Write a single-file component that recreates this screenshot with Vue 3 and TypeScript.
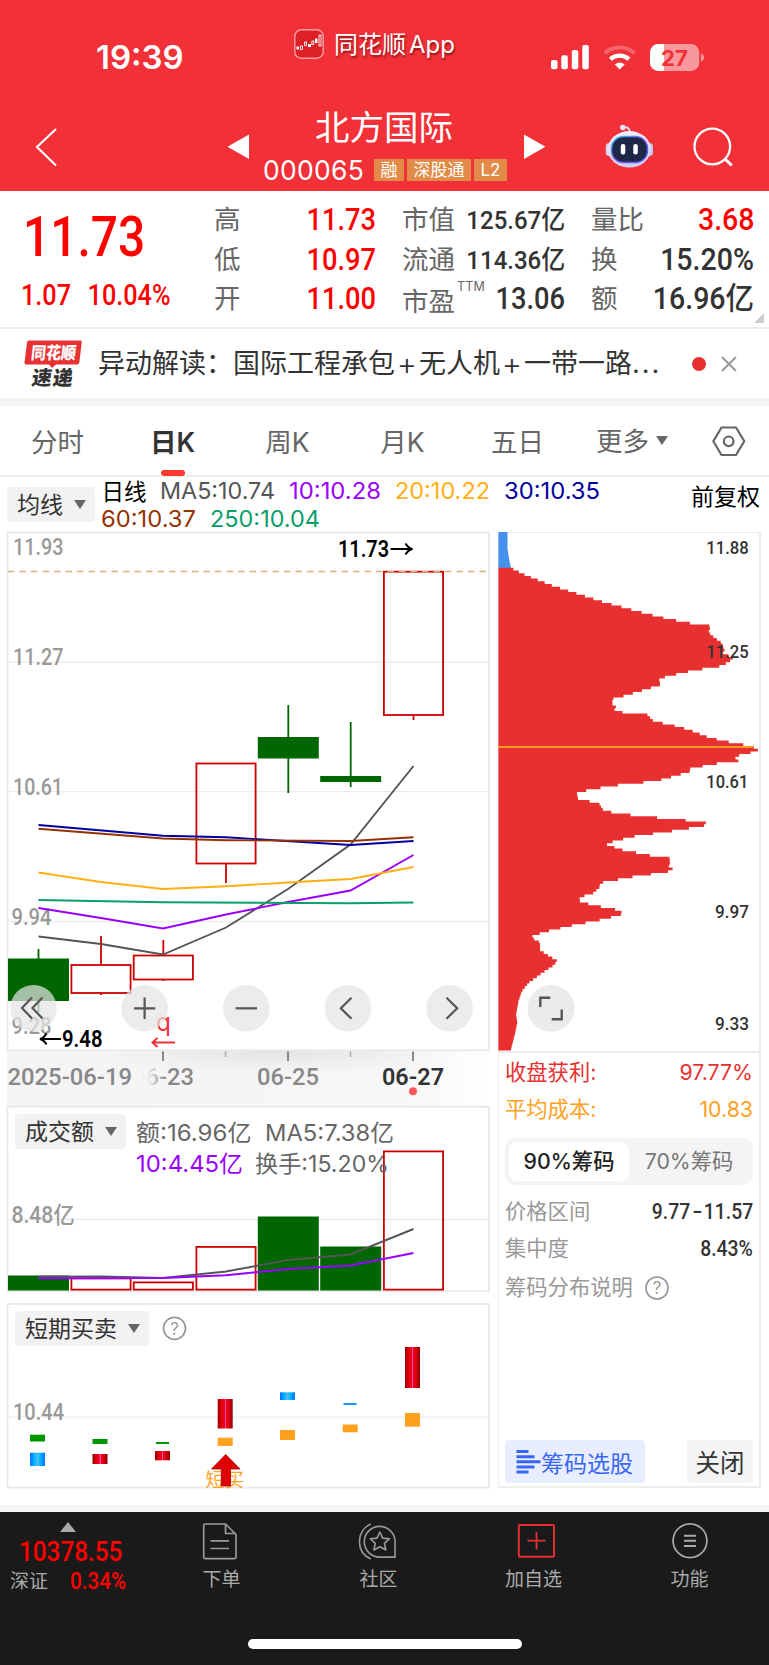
<script setup lang="ts">
type Point = [number, number]

interface Candle {
  x: number
  open: number
  close: number
  high: number
  low: number
  up: boolean
  volume: number
}

const quoteRows = [
  ['高', '11.73', '市值', '125.67', '量比', '3.68'],
  ['低', '10.97', '流通', '114.36', '换', '15.20%'],
  ['开', '11.00', '市盈', '13.06', '额', '16.96'],
]

const tabs = ['分时', '日K', '周K', '月K', '五日']

const legend = [
  { text: '日线', x: 101.5, y: 500, w: 45, color: '#000' },
  { text: 'MA5:10.74', x: 160, y: 499, w: 115, color: '#555' },
  { text: '10:10.28', x: 289, y: 499, w: 92, color: '#9a00ff' },
  { text: '20:10.22', x: 395, y: 499, w: 95, color: '#ffae14' },
  { text: '30:10.35', x: 504, y: 499, w: 96, color: '#0000a0' },
  { text: '60:10.37', x: 101, y: 526.5, w: 95, color: '#963200' },
  { text: '250:10.04', x: 210, y: 526.5, w: 110, color: '#08a06a' },
]

const candles: Candle[] = [
  { x: 38.5, open: 958.5, close: 1001, high: 949, low: 1012, up: false, volume: 1276 },
  { x: 101, open: 993, close: 965, high: 936, low: 995, up: true, volume: 1278 },
  { x: 163.3, open: 979.5, close: 955.5, high: 940, low: 981, up: true, volume: 1282 },
  { x: 226, open: 863.5, close: 763.5, high: 763.5, low: 883, up: true, volume: 1246.5 },
  { x: 288.3, open: 737, close: 758.5, high: 705, low: 793, up: false, volume: 1217 },
  { x: 350.7, open: 776, close: 782, high: 722, low: 787, up: false, volume: 1247 },
  { x: 413.5, open: 715, close: 571.7, high: 571.7, low: 720, up: true, volume: 1151 },
]

const averages: { color: string; points: Point[] }[] = [
  { color: '#555', points: [[38.5, 936.5], [101, 944], [163, 954.5], [226, 927.5], [288, 889], [350.5, 844.5], [413.5, 766]] },
  { color: '#9a00ff', points: [[38.5, 908], [101, 918], [163, 928.5], [226, 914.5], [288, 902], [350.5, 890.5], [413.5, 855]] },
  { color: '#ffae14', points: [[38.5, 872.5], [101, 882], [163, 889], [226, 886.3], [288, 882.5], [350.5, 879], [413.5, 867]] },
  { color: '#0000a0', points: [[38.5, 825], [163, 835.8], [226, 837.3], [350.5, 845], [413.5, 841]] },
  { color: '#963200', points: [[38.5, 828.7], [163, 838.5], [226, 840.2], [350.5, 841], [413.5, 837.3]] },
  { color: '#08a06a', points: [[38.5, 900], [163, 902.3], [350.5, 903.3], [413.5, 902.5]] },
]

const volumeAverages: { color: string; points: Point[] }[] = [
  { color: '#555', points: [[38.5, 1276.8], [101, 1276.5], [163, 1278], [226, 1271.5], [288, 1260], [350.5, 1254.5], [413.5, 1229]] },
  { color: '#9a00ff', points: [[38.5, 1278.3], [163, 1278], [226, 1275.3], [288, 1269], [350.5, 1265.5], [413.5, 1253]] },
]

const priceLabels = [
  { text: '11.93', x: 13, y: 555, w: 50.5 },
  { text: '11.27', x: 13, y: 665.3, w: 50.5 },
  { text: '10.61', x: 13, y: 794.6, w: 50 },
  { text: '9.94', x: 11.5, y: 924.8, w: 40 },
  { text: '9.28', x: 11.5, y: 1034.3, w: 40 },
]

const tools = [
  { x: 33.5, path: 'M32 997.5L22 1008L32 1018.5M42.5 997.5L32.5 1008L42.5 1018.5' },
  { x: 144.6, path: 'M134 1008.3H155.3M144.6 997.6V1019' },
  { x: 246.3, path: 'M235.6 1008.3H257' },
  { x: 348, path: 'M351.5 997.8L340.8 1008.3L351.5 1018.8' },
  { x: 449.6, path: 'M446.5 997.8L457.2 1008.3L446.5 1018.8' },
]

const signals = [
  { x: 30, y: 1434.7, w: 15, h: 6.8, fill: '#009600' },
  { x: 30, y: 1452.7, w: 15, h: 13.3, fill: 'url(#blueBar)' },
  { x: 92.5, y: 1439, w: 15, h: 5, fill: '#009600' },
  { x: 92.5, y: 1454, w: 15, h: 10, fill: 'url(#redBar)' },
  { x: 156, y: 1442, w: 13, h: 2, fill: '#009600' },
  { x: 155, y: 1451, w: 15, h: 9.3, fill: 'url(#redBar)' },
  { x: 217.7, y: 1399, w: 15, h: 29.5, fill: 'url(#redBar)' },
  { x: 217.7, y: 1437.7, w: 15, h: 8.2, fill: '#ffa01e' },
  { x: 280, y: 1392.3, w: 15, h: 7.7, fill: 'url(#blueBar)' },
  { x: 280, y: 1430, w: 15, h: 10, fill: '#ffa01e' },
  { x: 343.5, y: 1403, w: 13, h: 2, fill: '#1594ff' },
  { x: 342.7, y: 1424.5, w: 15, h: 7.8, fill: '#ffa01e' },
  { x: 405, y: 1347, w: 15, h: 41, fill: 'url(#redBar)' },
  { x: 405, y: 1413, w: 15, h: 13.7, fill: '#ffa01e' },
]

const X_UNIT = 1 / 3
const Y_UNIT = 0.33805
const LEFT = 25
const STEP = 2.7

// Outline of the holding-cost distribution: [extent, depth].
const profile: Point[] = [
  [62, 112], [110, 135], [180, 162], [260, 188], [340, 213], [440, 240], [530, 262], [612, 278], [662, 284], [660, 290],
  [655, 303], [675, 320], [697, 335], [700, 348], [708, 352], [695, 362], [730, 378], [715, 392], [690, 403], [655, 408],
  [590, 420], [525, 435], [500, 447], [520, 456], [480, 468], [405, 490], [367, 500], [367, 515], [380, 521], [370, 530],
  [400, 540], [472, 547], [490, 565], [550, 578], [600, 592], [655, 613], [705, 625], [760, 635], [790, 642], [808, 654],
  [770, 661], [728, 672], [745, 678], [745, 685], [690, 689], [600, 706], [605, 713], [575, 722], [520, 737], [500, 743],
  [395, 753], [310, 766], [260, 777], [264, 795], [300, 803], [333, 812], [333, 825], [365, 835], [415, 842], [525, 853],
  [635, 863], [662, 871], [600, 882], [530, 893], [440, 905], [380, 919], [345, 929], [372, 936], [375, 942], [420, 951],
  [482, 963], [538, 968], [540, 985], [535, 997], [556, 1006], [515, 1014], [440, 1024], [380, 1035], [330, 1044],
  [328, 1058], [310, 1074], [268, 1087], [270, 1100], [310, 1110], [390, 1125], [400, 1136], [345, 1151], [250, 1169],
  [160, 1190], [122, 1204], [150, 1220], [150, 1243], [180, 1262], [202, 1275], [190, 1288], [150, 1315], [115, 1340],
  [95, 1365], [85, 1395], [78, 1435], [82, 1455], [75, 1490], [62, 1540],
]

function extentAt(depth: number): number {
  for (let i = 1; i < profile.length; i++) {
    const [x0, y0] = profile[i - 1]
    const [x1, y1] = profile[i]
    if (depth <= y1) return x0 + ((x1 - x0) * (depth - y0)) / (y1 - y0)
  }
  return profile[profile.length - 1][0]
}

function chipPath(): string {
  const top = 567.8
  const bottom = 1050.6
  let d = `M498.4 ${top}`
  for (let y = top; y < bottom; y += STEP) {
    const depth = (y + STEP / 2 - 530) / Y_UNIT
    const x = 498.4 + (extentAt(depth) - LEFT) * X_UNIT
    d += `H${x.toFixed(1)}V${Math.min(y + STEP, bottom).toFixed(1)}`
  }
  return d + 'H498.4Z'
}

const chips = chipPath()

const chipLabels = [
  { text: '11.88', x: 706.3, y: 553.6, w: 42.5 },
  { text: '11.25', x: 706.3, y: 657.6, w: 42.5 },
  { text: '10.61', x: 706.3, y: 787.8, w: 42 },
  { text: '9.97', x: 715, y: 917.5, w: 34 },
  { text: '9.33', x: 715, y: 1030, w: 34 },
]

const line = (points: Point[]) => points.map((p) => p.join(',')).join(' ')
</script>

<template>
  <div class="page">
    <header class="top">
      <div class="status">
        <span class="clock">19:39</span>
        <div class="brand">
          <svg width="30" height="30" viewBox="0 0 30 30">
            <rect x=".8" y=".8" width="28.4" height="28.4" rx="6.5" fill="#de2027" stroke="#f99a9d" stroke-width="1.5" />
            <path d="M2 9H28M2 20H28M10 2V28M20 2V28" stroke="#cf2429" stroke-width=".5" />
            <path d="M2.5 17.5h2.5v3h-2.5zM14 15h3v3h-3zM21 9.500h2.500v4.500h-2.500z" fill="#fff" />
            <path d="M6.500 17h2v3.500h-2zM10.500 13h2v3.500h-2zM17.800 12h2v3.500h-2zM25 6h2v11h-2z" fill="none" stroke="#fff" stroke-width=".9" />
          </svg>
          <span>同花顺<i>App</i></span>
        </div>
        <div class="signals">
          <svg width="160" height="30" viewBox="548 43 160 30">
            <g fill="#fff">
              <rect x="551" y="60" width="6.500" height="9.300" rx="2" />
              <rect x="561.300" y="55.300" width="6.500" height="14" rx="2" />
              <rect x="571.800" y="50" width="6.500" height="19.300" rx="2" />
              <rect x="582.300" y="45" width="6.500" height="24.300" rx="2" />
            </g>
            <g fill="none" stroke="#fff">
              <path d="M604.800 53.300A22 22 0 0 1 634.600 53.300" stroke-width="4.200" opacity=".25" />
              <path d="M610.300 59.300A14 14 0 0 1 629 59.300" stroke-width="4.200" />
            </g>
            <path d="M614.700 64.500Q619.700 60.500 624.700 64.500L619.700 69.500Z" fill="#fff" />
            <rect x="650" y="44" width="49.300" height="27" rx="8.500" fill="#fff" opacity=".5" />
            <path d="M664 44h-5.500a8.500 8.500 0 0 0 -8.500 8.500v10a8.500 8.500 0 0 0 8.500 8.500h5.500z" fill="#fff" />
            <path d="M701 53.500q3 1 3 4t-3 4z" fill="#fff" opacity=".5" />
            <text x="661" y="65.500" class="battery" textLength="27" lengthAdjust="spacingAndGlyphs">27</text>
          </svg>
        </div>
      </div>
      <nav class="titlebar">
        <svg class="back" width="24" height="42" viewBox="35 126 24 42"><path d="M56 129L37 147L56 165.500" fill="none" stroke="#fff" stroke-width="2.200" /></svg>
        <svg class="prev" width="23" height="26" viewBox="0 0 23 26"><path d="M.5 12.800L22 .5V25Z" fill="#fff" /></svg>
        <div class="stock">
          <h1>北方国际</h1>
          <div class="code"><b>000065</b><em>融</em><em>深股通</em><em>L2</em></div>
        </div>
        <svg class="next" width="23" height="26" viewBox="0 0 23 26"><path d="M22.500 12.800L1 .5V25Z" fill="#fff" /></svg>
        <svg class="robot" width="50" height="46" viewBox="604 123 50 46">
          <defs>
            <linearGradient id="shell" x1="0" y1="0" x2="0" y2="1"><stop offset="0" stop-color="#f3effc" /><stop offset="1" stop-color="#cfcdf0" /></linearGradient>
            <linearGradient id="visor" x1="0" y1="0" x2="1" y2="1"><stop offset="0" stop-color="#2fd3f5" /><stop offset=".5" stop-color="#7a4df0" /><stop offset="1" stop-color="#4b62ff" /></linearGradient>
          </defs>
          <path d="M623 127.500Q629.500 126 629.800 132" fill="none" stroke="#dad9f4" stroke-width="2" />
          <circle cx="622.800" cy="127.500" r="2.700" fill="#e5e3f8" />
          <rect x="605.800" y="143" width="8" height="13" rx="3.500" fill="#d9d6f5" />
          <rect x="645" y="143" width="8" height="13" rx="3.500" fill="#c9c6ee" />
          <ellipse cx="629.300" cy="149.300" rx="21.500" ry="18.300" fill="url(#shell)" />
          <rect x="611.500" y="136.500" width="36" height="26" rx="12" fill="#1e2745" stroke="url(#visor)" stroke-width="1.500" />
          <rect x="620.800" y="144" width="4.500" height="10.500" rx="2" fill="#fff" />
          <rect x="633.300" y="144" width="4.500" height="10.500" rx="2" fill="#fff" />
        </svg>
        <svg class="search" width="42" height="42" viewBox="692 126 42 42"><g fill="none" stroke="#fff" stroke-width="2.300"><circle cx="712.300" cy="146.500" r="17.800" /><path d="M724.500 158.500L731.800 165.500" stroke-width="3" /></g></svg>
      </nav>
    </header>

    <section class="quote">
      <div class="price">
        <strong>11.73</strong>
        <p><span>1.07</span><span>10.04%</span></p>
      </div>
      <div class="stats">
        <template v-for="(row, i) in quoteRows" :key="i">
          <label>{{ row[0] }}</label>
          <span class="din red">{{ row[1] }}</span>
          <label class="mid" :class="{ low: i === 2 }">{{ row[2] }}<sup v-if="i === 2">TTM</sup></label>
          <span class="din" :class="{ small: i < 2 }">{{ row[3] }}<u v-if="i < 2">亿</u></span>
          <label class="end">{{ row[4] }}</label>
          <span class="din last" :class="{ red: i === 0 }">{{ row[5] }}<u v-if="i === 2">亿</u></span>
        </template>
      </div>
      <i class="corner"></i>
    </section>

    <section class="news">
      <svg width="58" height="50" viewBox="24 338 58 50">
        <path d="M29 339.500H80.500Q82 339.500 81.800 341L79.300 361.500Q79 363.500 77 363.500H56L52 367L49 363.500H26Q24.300 363.500 24.500 361.500L27 341.500Q27.200 339.500 29 339.500Z" fill="#e93032" />
        <text class="badge white" transform="translate(30.500 358) skewX(-6)" textLength="45" lengthAdjust="spacingAndGlyphs">同花顺</text>
        <text class="badge dark" transform="translate(31 383.500) skewX(-8)" textLength="41">速递</text>
      </svg>
      <p>异动解读：国际工程承包<i>+</i>无人机<i>+</i>一带一路<s>...</s></p>
      <span class="dot"></span>
      <svg class="close" width="16" height="16" viewBox="0 0 16 16"><path d="M1 1L15 15M15 1L1 15" stroke="#999" stroke-width="2" /></svg>
    </section>

    <nav class="tabs">
      <a v-for="tab in tabs" :key="tab" :class="{ active: tab === '日K' }">{{ tab }}</a>
      <a class="more">更多<i class="caret"></i></a>
      <svg width="36" height="32" viewBox="711 425 36 32"><g fill="none" stroke="#666" stroke-width="2.200"><path d="M721.500 427.500H736L744.300 441.300L736 455H721.500L713.300 441.300Z" stroke-linejoin="round" /><circle cx="728.700" cy="441.300" r="4.800" /></g></svg>
    </nav>

    <section class="legend">
      <button class="picker">均线<i class="caret"></i></button>
      <svg width="769" height="55" viewBox="0 477 769 55">
        <text v-for="item in legend" :key="item.text" :x="item.x" :y="item.y" :fill="item.color" :textLength="item.w" lengthAdjust="spacingAndGlyphs" class="ui">{{ item.text }}</text>
        <text x="691" y="504.500" textLength="69" class="ui">前复权</text>
      </svg>
    </section>

    <main class="charts">
      <div class="left">
        <svg class="kline" width="490" height="574" viewBox="0 532 490 574">
          <defs>
            <linearGradient id="axisFade" x1="0" y1="0" x2="1" y2="0"><stop offset="0" stop-color="#f4f4f4" /><stop offset=".8" stop-color="#f6f6f6" /><stop offset="1" stop-color="#fff" /></linearGradient>
            <radialGradient id="shadeSpot"><stop offset="0" stop-color="#e2e2e2" /><stop offset="1" stop-color="#e8e8e8" stop-opacity="0" /></radialGradient>
            <linearGradient id="dateFade" x1="0" y1="0" x2="1" y2="0"><stop offset="0" stop-color="#f5f5f5" /><stop offset=".35" stop-color="#f5f5f5" stop-opacity=".9" /><stop offset="1" stop-color="#f5f5f5" stop-opacity="0" /></linearGradient>
            <clipPath id="axisClip"><rect x="7" y="1051" width="483" height="55" /></clipPath>
          </defs>
          <g stroke="#ececec" stroke-width="1.300">
            <path d="M8 662.300H489M8 791.600H489M8 921.500H489" />
            <rect x="7.500" y="532.500" width="481.500" height="517.800" fill="none" stroke="#e8e8e8" stroke-width="1.700" />
          </g>
          <rect x="7" y="1051.500" width="483" height="54.500" fill="url(#axisFade)" />
          <ellipse cx="275" cy="1051" rx="190" ry="24" fill="url(#shadeSpot)" clip-path="url(#axisClip)" />
          <g class="din-text" fill="#999">
            <text v-for="item in priceLabels" :key="item.text" :x="item.x" :y="item.y" :textLength="item.w" lengthAdjust="spacingAndGlyphs">{{ item.text }}</text>
          </g>
          <g v-for="c in candles" :key="c.x" :stroke="c.up ? '#cc0000' : '#006600'" :fill="c.up ? '#fff' : '#006600'" stroke-width="1.800">
            <path v-if="c.up" :d="`M${c.x} ${c.high}V${c.close}M${c.x} ${c.open}V${c.low}`" />
            <path v-else :d="`M${c.x} ${c.high}V${c.low}`" />
            <rect :x="c.x - 29.600" :y="Math.min(c.open, c.close) + (c.up ? 0 : 0.900)" width="59.200" :height="Math.abs(c.open - c.close) - (c.up ? 0 : 1.800)" :fill-opacity="c.up ? 0 : 1" />
          </g>
          <path d="M8 571.500H489" stroke="#dcb27e" stroke-width="1.300" stroke-dasharray="6.500 5" />
          <polyline v-for="a in averages" :key="a.color" :points="line(a.points)" :stroke="a.color" fill="none" stroke-width="1.900" />
          <text class="din-text strong" x="338" y="557" textLength="51" lengthAdjust="spacingAndGlyphs">11.73</text>
          <path d="M390.500 549H412.500M405.500 543.500Q408 548 412.500 549Q408 550 405.500 554.500" fill="none" stroke="#000" stroke-width="1.900" />
          <g fill="none" stroke="#f22f37" stroke-width="2"><path d="M175 1042.500H152.500M157.500 1038L152.500 1042.500L157.500 1047" /></g>
          <text class="mark" x="156" y="1030.500">q</text>
          <g v-for="t in tools" :key="t.x">
            <circle :cx="t.x" cy="1008.300" r="23.300" fill="#e4e4e4" fill-opacity=".72" />
            <path :d="t.path" fill="none" stroke="#555" stroke-width="2.200" />
          </g>
          <path d="M61 1039H40M46.500 1033.500Q44 1038 40 1039Q44 1040 46.500 1044.500" fill="none" stroke="#000" stroke-width="1.900" />
          <text class="din-text strong" x="62" y="1047" textLength="40.500" lengthAdjust="spacingAndGlyphs">9.48</text>
          <g stroke="#888" stroke-width="2"><path d="M163 1051.500V1061M288 1051.500V1061M413 1051.500V1061" /><path d="M225.500 1051.500V1057M350.500 1051.500V1057" stroke="#aaa" stroke-width="1.500" /></g>
          <g class="din-text" fill="#888">
            <text x="132" y="1085" textLength="62" lengthAdjust="spacingAndGlyphs">06-23</text>
            <rect x="128" y="1064" width="13" height="24" fill="#f5f5f5" />
            <rect x="140" y="1064" width="26" height="24" fill="url(#dateFade)" />
            <text x="7.500" y="1085.300" textLength="124.500" lengthAdjust="spacingAndGlyphs">2025-06-19</text>
            <text x="257" y="1085" textLength="62" lengthAdjust="spacingAndGlyphs">06-25</text>
            <text x="382" y="1085" textLength="62" lengthAdjust="spacingAndGlyphs" class="strong" fill="#333">06-27</text>
          </g>
          <circle cx="413" cy="1091.300" r="4" fill="#f9595d" />
        </svg>

        <div class="panel">
          <svg width="490" height="197" viewBox="0 1106 490 197">
            <path d="M8 1219.600H489" stroke="#ececec" stroke-width="1.500" />
            <rect x="7.500" y="1106.700" width="481.500" height="184.500" fill="none" stroke="#e8e8e8" stroke-width="1.700" />
            <rect v-for="c in candles" :key="c.x" :x="c.x - 29.600" :y="c.volume + 0.400" width="59.200" :height="1289.200 - c.volume" :fill="c.up ? 'none' : '#006600'" :stroke="c.up ? '#cc0000' : '#006600'" stroke-width="1.800" />
            <polyline v-for="a in volumeAverages" :key="a.color" :points="line(a.points)" :stroke="a.color" fill="none" stroke-width="1.900" />
            <text class="din-text" fill="#999" x="11.500" y="1223" textLength="63" lengthAdjust="spacingAndGlyphs">8.48亿</text>
            <g class="ui" fill="#666">
              <text x="136" y="1141" textLength="115.500" lengthAdjust="spacingAndGlyphs">额:16.96亿</text>
              <text x="265" y="1141" textLength="129" lengthAdjust="spacingAndGlyphs">MA5:7.38亿</text>
              <text x="136" y="1172" fill="#9a00ff" textLength="107" lengthAdjust="spacingAndGlyphs">10:4.45亿</text>
              <text x="255" y="1172" textLength="134" lengthAdjust="spacingAndGlyphs">换手:15.20%</text>
            </g>
          </svg>
          <button class="picker">成交额<i class="caret"></i></button>
        </div>

        <div class="panel">
          <svg width="490" height="186" viewBox="0 1303 490 186">
            <defs>
              <linearGradient id="redBar"><stop offset="0" stop-color="#a00000" /><stop offset=".35" stop-color="#f00010" /><stop offset=".46" stop-color="#f00020" /><stop offset=".48" stop-color="#ff50b0" /><stop offset=".54" stop-color="#ff50b0" /><stop offset=".56" stop-color="#f00020" /><stop offset=".65" stop-color="#f00010" /><stop offset="1" stop-color="#900000" /></linearGradient>
              <linearGradient id="blueBar"><stop offset="0" stop-color="#0a6eff" /><stop offset=".35" stop-color="#00c0ff" /><stop offset=".5" stop-color="#60b4f0" /><stop offset=".65" stop-color="#00c0ff" /><stop offset="1" stop-color="#0a6eff" /></linearGradient>
            </defs>
            <path d="M8 1417.200H489" stroke="#ececec" stroke-width="1.300" />
            <rect x="7.500" y="1304" width="481.500" height="183.500" fill="none" stroke="#e8e8e8" stroke-width="1.700" />
            <text class="din-text" fill="#999" x="13" y="1420.300" textLength="51" lengthAdjust="spacingAndGlyphs">10.44</text>
            <g stroke="#999" fill="none" stroke-width="1.700"><circle cx="174.500" cy="1328.300" r="11" /></g>
            <text class="hint" x="174.500" y="1334.800">?</text>
            <rect v-for="(s, i) in signals" :key="i" :x="s.x" :y="s.y" :width="s.w" :height="s.h" :fill="s.fill" />
            <text class="buy" x="205.500" y="1486.500" textLength="38.500">短买</text>
            <path d="M225.700 1454.500L240 1469H230.500V1486H221.300V1469H211.500Z" fill="#e00000" stroke="#a80000" stroke-width=".8" />
          </svg>
          <button class="picker">短期买卖<i class="caret"></i></button>
        </div>
      </div>

      <aside class="right">
        <svg width="263" height="519" viewBox="498 532 263 519">
          <path d="M498.400 532H507.500V548Q509 560 511 568H498.400Z" fill="#4592ee" />
          <path :d="chips" fill="#e93030" />
          <path d="M498.400 746.900H753.500" stroke="#ff9c1e" stroke-width="2" />
          <g class="chip-text"><text v-for="item in chipLabels" :key="item.text" :x="item.x" :y="item.y" :textLength="item.w" lengthAdjust="spacingAndGlyphs">{{ item.text }}</text></g>
          <circle cx="551" cy="1008.300" r="23.400" fill="#ebebeb" />
          <path d="M540.300 1007V997.800H550.300M561.700 1009.500V1019.300H551.700" fill="none" stroke="#555" stroke-width="2.400" />
        </svg>
        <div class="detail">
          <p class="profit"><span>收盘获利:</span><span>97.77%</span></p>
          <p class="cost"><span>平均成本:</span><span>10.83</span></p>
          <div class="segment"><b>90%筹码</b><span>70%筹码</span></div>
          <p><span>价格区间</span><span class="num">9.77<i>-</i>11.57</span></p>
          <p><span>集中度</span><span class="num">8.43%</span></p>
          <p class="about"><span>筹码分布说明</span>
            <svg width="24" height="24" viewBox="0 0 24 24"><circle cx="12" cy="12" r="11" fill="none" stroke="#999" stroke-width="1.700" /><text class="hint" x="12" y="18.300">?</text></svg>
          </p>
          <div class="actions">
            <button class="pick"><svg width="25" height="24" viewBox="0 0 25 24"><path d="M.5 1.500H12.500M.5 6.700H18.500M.5 11.800H24.500M.5 17H18.500M.5 22H12.500" stroke="#3867f5" stroke-width="3" /></svg>筹码选股</button>
            <button class="shut">关闭</button>
          </div>
        </div>
      </aside>
    </main>

    <footer class="bottom">
      <div class="bar">
        <div class="index">
          <i></i>
          <strong>10378.55</strong>
          <p><span>深证</span><b>0.34%</b></p>
        </div>
        <a class="order">
          <svg width="36" height="38" viewBox="202 1522 36 38"><g fill="none" stroke="#999" stroke-width="1.700"><path d="M225.500 1524H205Q203.700 1524 203.700 1525.300V1557.300Q203.700 1558.600 205 1558.600H234.600Q236 1558.600 236 1557.300V1534.500ZM225.500 1524V1533.500H236" stroke-linejoin="round" /><path d="M210.500 1540.800H229M210.500 1548.500H229" /></g></svg>下单
        </a>
        <a class="community">
          <svg width="42" height="40" viewBox="356 1521 42 40"><g fill="none" stroke="#999" stroke-width="1.700"><path d="M370.500 1523Q358.500 1529 358.500 1541.700T370.500 1560" /><path d="M396 1558V1541.700A16.200 16.200 0 1 0 379.800 1558Z" /><path d="M380 1531.500L383 1538L390 1538.800L384.800 1543.500L386.300 1550.500L380 1547L373.700 1550.500L375.200 1543.500L370 1538.800L377 1538Z" stroke-linejoin="round" /></g></svg>社区
        </a>
        <a class="add">
          <svg width="38" height="36" viewBox="516 1524 38 36"><g fill="none" stroke="#e93030"><rect x="517.800" y="1526" width="35.200" height="31.700" rx="1" stroke-width="1.900" /><path d="M526.500 1541.700H544.500M535.500 1533V1550.500" stroke-width="1.800" /></g></svg>加自选
        </a>
        <a class="menu">
          <svg width="36" height="36" viewBox="671 1524 36 36"><g fill="none" stroke="#aaa" stroke-width="1.700"><circle cx="689" cy="1541.700" r="16.900" /><path d="M683 1536.700H695M683 1541.800H695M683 1547H695" stroke-width="1.900" /></g></svg>功能
        </a>
      </div>
      <div class="home"></div>
    </footer>
  </div>
</template>

<style>
body { background: #fff; }
</style>

<style scoped>
.page { width: 769px; height: 1665px; overflow: hidden; background: #fff; color: #333; font-family: Inter, "Noto Sans CJK SC", sans-serif; display: flex; flex-direction: column; }
.page * { box-sizing: border-box; }
svg { display: block; flex: none; overflow: visible; }
p, h1 { margin: 0; font-weight: inherit; }
i, em, u, s { font-style: normal; text-decoration: none; }
button { border: 0; padding: 0; font-family: inherit; color: #333; }
.ui { font: 23px Inter, "Noto Sans CJK SC", sans-serif; }
.din-text { font: 500 23px Roboto, "Noto Sans CJK SC", sans-serif; }
.strong { font-weight: 600; }
.chip-text { font: 500 19px Roboto, sans-serif; fill: #333; }
.hint { font: 17px Inter, sans-serif; fill: #999; text-anchor: middle; }
.buy { font: 19px "Noto Sans CJK SC", sans-serif; fill: #ffa01e; }
.mark { font: 24px "DejaVu Sans", sans-serif; fill: #f23038; }
.battery { font: 700 21.500px Inter, sans-serif; fill: #f23038; }

.top { height: 191px; background: #f23038; color: #fff; flex: none; }
.status { height: 100px; display: flex; align-items: flex-start; }
.clock { width: 197px; padding: 37px 0 0 96px; font-size: 33px; line-height: 40px; font-weight: 600; letter-spacing: 0; }
.brand { margin-left: 97px; padding-top: 29px; width: 254px; display: flex; gap: 10px; font-size: 24px; line-height: 31px; text-shadow: 1px 2px 2px rgba(80, 0, 0, .6); }
.brand i { margin-left: 3px; }
.signals { padding-top: 43px; }
.titlebar { height: 91px; display: flex; align-items: flex-start; }
.back { margin: 26px 0 0 35px; }
.prev, .next { margin-top: 34px; }
.prev { margin-left: 168px; }
.stock { width: 273px; display: flex; flex-direction: column; align-items: center; }
h1 { font-size: 34.500px; line-height: 50px; margin: 3px 5px 0 0; font-weight: 400; }
.code { display: flex; gap: 3px; align-items: center; height: 24px; margin: 5px 3px 0 0; }
.code b { font-weight: 400; font-size: 26.500px; width: 108px; letter-spacing: .3px; }
.code em { background: #e28b48; font-size: 17px; line-height: 22px; height: 22px; padding: 0 6.500px; }
.robot { margin: 23px 0 0 58px; }
.search { margin: 26px 0 0 38px; }

.quote { height: 138px; border-bottom: 2px solid #ececec; flex: none; display: flex; position: relative; }
.price { width: 214px; color: #f00; font-family: Roboto, sans-serif; font-weight: 500; }
.price strong { display: block; font-weight: 500; font-size: 55px; line-height: 60px; margin: 16px 0 0 23px; transform: scaleX(.87); transform-origin: left; }
.price p { display: flex; gap: 19px; margin: 11px 0 0 21px; font-size: 29px; line-height: 34px; transform: scaleX(.87); transform-origin: left; }
.stats { width: 540px; display: grid; grid-template-columns: 55px 107px 72px 117px 68px 121px; grid-auto-rows: 39.500px; padding-top: 9px; line-height: 39px; white-space: nowrap; }
.stats label { font-size: 26.500px; color: #666; position: relative; }
.stats .mid, .stats .end { padding-left: 26px; }
.stats .low { padding-top: 3px; }
.stats sup { position: absolute; left: 81px; top: -2px; font-size: 12.500px; line-height: 20px; letter-spacing: .2px; }
.din { font-family: Roboto, "Noto Sans CJK SC", sans-serif; font-weight: 500; font-size: 31px; text-align: right; justify-self: end; transform: scaleX(.88); transform-origin: right; }
.din.small { font-size: 26.500px; transform: scaleX(.905); }
.din.last { transform: scaleX(.92); }
.din u { font-size: 1em; }
.red { color: #f00; }
.corner { position: absolute; right: 5px; bottom: 4px; border-style: solid; border-width: 0 0 10px 10px; border-color: transparent transparent #ccc transparent; }

.news { height: 69px; flex: none; display: flex; align-items: center; padding-left: 24px; }
.badge { font: 900 17px "Noto Sans CJK SC", sans-serif; }
.badge.white { fill: #fff; }
.badge.dark { fill: #333; font-size: 20px; }
.news p { margin-left: 16px; width: 594px; font-size: 27px; line-height: 40px; white-space: nowrap; display: flex; }
.news p i { width: 24px; font-size: 31px; font-weight: 300; display: flex; justify-content: center; }
.news s { letter-spacing: 2px; }
.dot { width: 14px; height: 14px; border-radius: 7px; background: #e93030; margin: 0; }
.close { margin-left: 15px; }

.tabs { height: 79px; border-top: 8px solid #f4f4f4; border-bottom: 2px solid #ececec; flex: none; display: flex; align-items: center; }
.tabs a { width: 115px; height: 69px; line-height: 72px; text-align: center; font-size: 26.500px; color: #666; position: relative; }
.tabs .active { color: #333; font-weight: 600; }
.tabs .active::after { content: ""; position: absolute; left: 46px; bottom: -1px; width: 24px; height: 6px; border-radius: 3px; background: #fe3a2f; }
.tabs .more { width: 115px; margin-left: 21px; text-align: left; display: flex; align-items: center; gap: 7px; }
.caret { display: inline-block; border-style: solid; border-width: 9px 6px 0; border-color: #666 transparent transparent; }

.legend { height: 55px; flex: none; position: relative; }
.picker { position: absolute; left: 15px; top: 8px; height: 35px; border-radius: 4px; background: #f2f2f2; font-size: 23px; line-height: 34px; padding: 0 9.500px 0 10px; display: flex; align-items: center; gap: 10.500px; }
.legend .picker { left: 7px; top: 10px; }

.charts { height: 973px; flex: none; display: flex; }
.left { width: 490px; }
.panel { position: relative; }
.right { width: 263px; height: 956px; margin-left: 8px; border: 2px solid #ececec; border-left-width: 1px; border-top-width: 1px; }
.right > svg { margin: -1px 0 0 -1px; }
.detail { border-top: 2px solid #ececec; height: 436px; padding: 1px 6px 0 6px; font-size: 21.300px; display: flex; flex-direction: column; }
.detail p { display: flex; justify-content: space-between; height: 37px; line-height: 37px; color: #999; }
.detail .profit { color: #e93030; }
.detail .cost { color: #ffa01e; }
.segment { margin: 10px 0 8px; height: 47px; border-radius: 10px; background: #f4f4f4; padding: 4px; display: flex; line-height: 38px; text-align: center; flex: none; }
.segment b { width: 120px; background: #fff; border-radius: 8px; font-weight: 500; color: #222; }
.segment span { flex: 1; color: #777; }
.detail .num { font-family: Roboto, sans-serif; font-weight: 500; color: #333; font-size: 22px; transform: scaleX(.88); transform-origin: right; }
.num i { display: inline-block; margin: 0 4px; transform: scaleX(1.500); }
.detail .about { justify-content: flex-start; align-items: center; gap: 12px; margin-top: 2px; }
.actions { margin-top: auto; margin-bottom: 4px; display: flex; justify-content: space-between; }
.actions button { height: 43px; border-radius: 4px; display: flex; align-items: center; }
.pick { background: #e8edff; color: #3867f5; width: 140px; padding-left: 11px; font-size: 23px; }
.actions .pick { color: #3867f5; }
.shut { background: #f4f4f4; width: 66px; justify-content: center; font-size: 24.500px; }

.bottom { height: 160px; flex: none; background: #1a1a1a; border-top: 7px solid #f4f4f4; color: #aaa; }
.bar { height: 127px; display: flex; }
.index { width: 143.500px; font-family: Roboto, "Noto Sans CJK SC", sans-serif; }
.index > i { display: block; margin: 10px 0 0 60px; width: 0; border-style: solid; border-width: 0 8.500px 10px; border-color: transparent transparent #aaa; }
.index strong { display: block; color: #f00; font-weight: 500; font-size: 27px; line-height: 32px; margin: 4px 0 0 18.500px; transform: scaleX(.9); transform-origin: left; }
.index p { display: flex; margin: 0 0 0 10px; line-height: 28px; font-size: 19px; }
.index b { margin-left: 22px; color: #f00; font-weight: 500; font-size: 23px; transform: scaleX(.9); transform-origin: left; }
.bar a { width: 156px; padding-top: 10px; display: flex; flex-direction: column; align-items: center; font-size: 19px; line-height: 28px; }
.bar a svg { height: 38px; margin-bottom: 6px; }
.bar .order svg { margin-right: 3px; }
.bar .community { padding-left: 2px; }
.bar .community svg { margin-right: 3px; }
.bar .add svg { margin-left: 4px; }
.home { width: 274px; height: 10px; border-radius: 5px; background: #fff; margin-left: 247.500px; }
</style>
